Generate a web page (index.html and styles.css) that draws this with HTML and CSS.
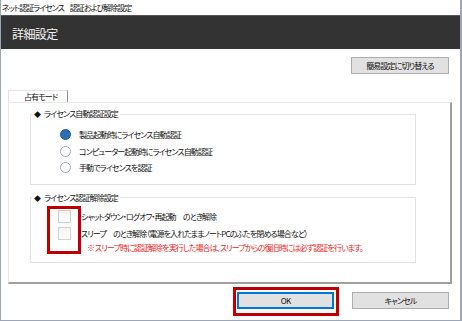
FILE: index.html
```html
<!DOCTYPE html>
<html lang="ja">
<head>
<meta charset="utf-8">
<link rel="stylesheet" href="styles.css">
</head>
<body>
<div class="window">
  <div class="titlebar"><span class="tpart">ネット認証ライセンス</span><span>認証および解除設定</span></div>
  <div class="header">詳細設定</div>
  <div class="content">
    <div class="toprow">
      <button class="btn btn-switch">簡易設定に切り替える</button>
    </div>
    <div class="tabs">
      <div class="tab">占有モード</div>
    </div>
    <div class="panel">
      <fieldset class="group group1">
        <legend><span class="diamond">◆</span>ライセンス自動認証設定</legend>
        <div class="rows">
          <div class="row"><span class="radio checked"></span><span>製品起動時にライセンス自動認証</span></div>
          <div class="row"><span class="radio"></span><span>コンピューター起動時にライセンス自動認証</span></div>
          <div class="row"><span class="radio"></span><span>手動でライセンスを認証</span></div>
        </div>
      </fieldset>
      <fieldset class="group group2">
        <legend><span class="diamond">◆</span>ライセンス認証解除設定</legend>
        <div class="checks">
          <div class="highlight hl-checks"></div>
          <div class="row crow"><span class="checkbox"></span><span>シャットダウン・ログオフ・再起動　のとき解除</span></div>
          <div class="row crow"><span class="checkbox"></span><span>スリープ　のとき解除（電源を入れたままノートPCのふたを閉める場合など）</span></div>
          <div class="note">※ スリープ時に認証解除を実行した場合は、スリープからの復旧時には必ず認証を行います。</div>
        </div>
      </fieldset>
    </div>
    <div class="footer">
      <div class="ok-wrap"><button class="btn btn-ok">OK</button></div>
      <button class="btn btn-cancel">キャンセル</button>
    </div>
  </div>
</div>
</body>
</html>
```

FILE: styles.css
```css
* { box-sizing: border-box; }
html, body { margin: 0; padding: 0; background: #ffffff; }
body {
  font-family: "Noto Sans CJK JP", "Noto Sans", sans-serif;
  font-feature-settings: "palt";
  color: #111;
}
.window {
  width: 462px;
  height: 321px;
  border-left: 1px solid #9ba6b9;
  border-right: 2px solid #9ba6b9;
  border-bottom: 1px solid #9ba6b9;
  background: #fff;
  display: flex;
  flex-direction: column;
}
.titlebar {
  height: 15px;
  font-size: 8px;
  line-height: 15px;
  padding-left: 1px;
  color: #111;
  white-space: nowrap;
  letter-spacing: -1px;
}
.tpart { margin-right: 6px; }
.header {
  height: 34px;
  background: #333333;
  border-top: 1px solid #555;
  color: #f4f4f4;
  font-size: 12px;
  line-height: 34px;
  padding-left: 11px;
  padding-top: 1px;
  letter-spacing: -0.6px;
}
.content {
  flex: 1;
  display: flex;
  flex-direction: column;
}
.toprow {
  display: flex;
  justify-content: flex-end;
  padding: 8px 11px 0 0;
}
.btn {
  font-family: inherit;
  font-feature-settings: "palt";
  font-size: 8px;
  letter-spacing: -0.9px;
  color: #111;
  background: #e1e1e1;
  border: 1px solid #adadad;
  padding: 0;
  margin: 0;
  line-height: 1;
}
.btn-switch {
  width: 98px;
  height: 17px;
}
.tabs {
  display: flex;
  margin-top: 16px;
  padding-left: 7px;
}
.tab {
  width: 60px;
  height: 12px;
  border-top: 1px solid #e3e3e3;
  border-left: 1px solid #e3e3e3;
  border-right: 1px solid #8f8f8f;
  font-size: 8px;
  letter-spacing: -0.9px;
  line-height: 11px;
  padding-left: 15px;
  color: #111;
}
.panel {
  margin-left: 7px;
  width: 444px;
  height: 182px;
  border-top: 1px solid #e8e8e8;
  border-left: 1px solid #e8e8e8;
  border-right: 2px solid #a0a0a0;
  border-bottom: 2px solid #a0a0a0;
  padding: 6px 34px 0 21px;
  display: flex;
  flex-direction: column;
}
.group {
  margin: 0;
  padding: 0;
  border: 1px solid #e2e2e2;
  min-width: 0;
}
.group legend {
  font-size: 8px;
  letter-spacing: -0.9px;
  line-height: 10px;
  padding: 0 2px;
  margin-left: 1px;
  color: #111;
}
.diamond {
  font-size: 7px;
  margin-right: 4px;
}
.group2 { margin-top: 8px; }
.rows {
  padding: 7.5px 0 7.5px 29px;
}
.row {
  display: flex;
  align-items: center;
  height: 16.5px;
  font-size: 8px;
  letter-spacing: -0.9px;
  white-space: nowrap;
}
.radio {
  width: 11px;
  height: 11px;
  border-radius: 50%;
  border: 1px solid #8eaed0;
  background: #fff;
  margin-right: 8px;
  flex: none;
}
.radio.checked {
  background: #2e6db4;
  border-color: #235a98;
}
.checks {
  position: relative;
  padding: 5px 0 8px 27px;
}
.crow { height: 17px; }
.checkbox {
  width: 13px;
  height: 13px;
  border: 1px solid #d0d0d0;
  background: linear-gradient(#f4f4f4, #ffffff);
  margin-right: 10px;
  flex: none;
}
.note {
  color: #f41c1c;
  font-size: 8px;
  letter-spacing: -0.9px;
  line-height: 12px;
  margin-left: 29px;
  white-space: nowrap;
}
.highlight {
  position: absolute;
  border: 3px solid #c00000;
}
.hl-checks {
  left: 16px;
  top: 3px;
  width: 34px;
  height: 48px;
}
.footer {
  display: flex;
  justify-content: flex-end;
  align-items: flex-start;
  margin-top: 3px;
  padding-right: 11px;
}
.ok-wrap {
  border: 3px solid #c00000;
  padding: 2px 2px 4px 1px;
  margin-right: 13px;
}
.btn-ok {
  display: block;
  width: 97px;
  height: 17px;
  border: 1px solid #0078d7;
  box-shadow: inset 0 0 0 1px #0078d7;
}
.btn-cancel {
  width: 97px;
  height: 17px;
  margin-top: 5px;
}
```
